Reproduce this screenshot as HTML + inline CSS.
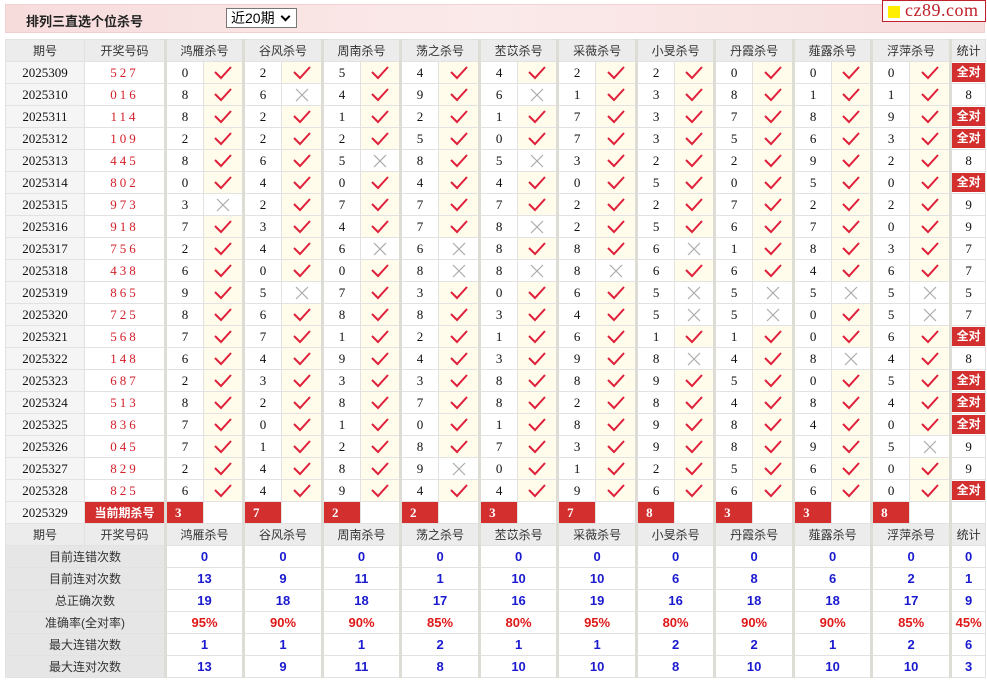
<!DOCTYPE html>
<html><head><meta charset="utf-8">
<style>
*{box-sizing:border-box}
body{margin:0;width:987px;height:680px;background:#fff;position:relative;font-family:"Liberation Sans","Noto Sans CJK SC",sans-serif;overflow:hidden}
.top{position:absolute;left:5px;top:4px;width:980px;height:29px;background:linear-gradient(90deg,#f7dcdc,#fbeaea 50%,#f7dcdc);border:1px solid #f0d0d0}
.title{position:absolute;left:20px;top:6px;font-size:13px;font-weight:bold;color:#222}
.sel{position:absolute;left:226px;top:8px;width:71px;height:20px;border:1px solid #777;background:#fff;font-size:14px;line-height:18px;padding-left:4px;color:#000}
.sel:after{content:"";position:absolute;right:7px;top:4px;width:5px;height:5px;border-right:2px solid #000;border-bottom:2px solid #000;transform:rotate(45deg)}
.logo{position:absolute;left:882px;top:0;width:104px;height:22px;background:#fff;border:1px solid #c0202a;font-family:"Liberation Serif",serif;font-size:18px;color:#c0202a;line-height:19px;padding-left:22px;letter-spacing:.5px}
.logo:before{content:"";position:absolute;left:5px;top:5px;width:12px;height:12px;background:#ffee00}
table{position:absolute;left:5px;top:39px;width:980px;border-collapse:collapse;table-layout:fixed}
td{height:22px;padding:0;border:1px solid #e2e2e2;text-align:center;font-family:"Liberation Serif","Noto Sans CJK SC",serif;font-size:13px;color:#111;vertical-align:middle;overflow:hidden}
tr.h td{background:#ececec;font-family:"Liberation Sans","Noto Sans CJK SC",sans-serif;font-size:12px;color:#333}
td.p{background:#f5f5f5}
td.d{color:#d4202a;letter-spacing:3px}
td.n{border-left:3px solid #ddddd5}
td.y{background:#fffcec}
td.s{border-left:3px solid #ddddd5}
tr.h td.g{border-left:3px solid #ddddd5}
.b{display:inline-block;background:#d32f2f;color:#fff;font-family:"Liberation Sans","Noto Sans CJK SC",sans-serif;font-weight:bold;font-size:12px;width:33px;height:19px;line-height:19px}
td.r{background:#d32f2f;color:#fff;font-weight:bold;text-align:left;padding-left:8px}
td.cur{background:#d32f2f;color:#fff;font-weight:bold;font-family:"Liberation Sans","Noto Sans CJK SC",sans-serif;font-size:12px}
td.L{background:#e6e6e6;font-family:"Liberation Sans","Noto Sans CJK SC",sans-serif;font-size:12px;color:#333}
td.v{font-family:"Liberation Sans",sans-serif;font-weight:bold;font-size:13px;color:#1a1ad0}
td.v.rd{color:#e01818}
svg{display:block;margin:auto}
.k path{fill:none;stroke:#e0203a;stroke-width:2}
.x path{fill:none;stroke:#aaa;stroke-width:1.2}
</style></head><body>
<div class="top"><div class="title">排列三直选个位杀号</div></div>
<div class="sel">近20期</div>
<div class="logo">cz89.com</div>
<table>
<colgroup><col style="width:79px"><col style="width:81px">
<col style="width:38px"><col style="width:40px"><col style="width:38px"><col style="width:41px"><col style="width:38px"><col style="width:40px"><col style="width:38px"><col style="width:41px"><col style="width:38px"><col style="width:40px"><col style="width:38px"><col style="width:41px"><col style="width:38px"><col style="width:40px"><col style="width:38px"><col style="width:41px"><col style="width:38px"><col style="width:40px"><col style="width:38px"><col style="width:41px"><col style="width:35px"></colgroup>
<tr class="h"><td>期号</td><td>开奖号码</td><td colspan="2" class="g">鸿雁杀号</td><td colspan="2" class="g">谷风杀号</td><td colspan="2" class="g">周南杀号</td><td colspan="2" class="g">荡之杀号</td><td colspan="2" class="g">苤苡杀号</td><td colspan="2" class="g">采薇杀号</td><td colspan="2" class="g">小旻杀号</td><td colspan="2" class="g">丹霞杀号</td><td colspan="2" class="g">薤露杀号</td><td colspan="2" class="g">浮萍杀号</td><td class="g">统计</td></tr>
<tr><td class="p">2025309</td><td class="d">527</td><td class="n">0</td><td class="y"><svg class="k" width="18" height="14"><path d="M1 6L7 12L17 1"/></svg></td><td class="n">2</td><td class="y"><svg class="k" width="18" height="14"><path d="M1 6L7 12L17 1"/></svg></td><td class="n">5</td><td class="y"><svg class="k" width="18" height="14"><path d="M1 6L7 12L17 1"/></svg></td><td class="n">4</td><td class="y"><svg class="k" width="18" height="14"><path d="M1 6L7 12L17 1"/></svg></td><td class="n">4</td><td class="y"><svg class="k" width="18" height="14"><path d="M1 6L7 12L17 1"/></svg></td><td class="n">2</td><td class="y"><svg class="k" width="18" height="14"><path d="M1 6L7 12L17 1"/></svg></td><td class="n">2</td><td class="y"><svg class="k" width="18" height="14"><path d="M1 6L7 12L17 1"/></svg></td><td class="n">0</td><td class="y"><svg class="k" width="18" height="14"><path d="M1 6L7 12L17 1"/></svg></td><td class="n">0</td><td class="y"><svg class="k" width="18" height="14"><path d="M1 6L7 12L17 1"/></svg></td><td class="n">0</td><td class="y"><svg class="k" width="18" height="14"><path d="M1 6L7 12L17 1"/></svg></td><td class="s"><span class="b">全对</span></td></tr>
<tr><td class="p">2025310</td><td class="d">016</td><td class="n">8</td><td class="y"><svg class="k" width="18" height="14"><path d="M1 6L7 12L17 1"/></svg></td><td class="n">6</td><td><svg class="x" width="14" height="14"><path d="M1 1L13 13M13 1L1 13"/></svg></td><td class="n">4</td><td class="y"><svg class="k" width="18" height="14"><path d="M1 6L7 12L17 1"/></svg></td><td class="n">9</td><td class="y"><svg class="k" width="18" height="14"><path d="M1 6L7 12L17 1"/></svg></td><td class="n">6</td><td><svg class="x" width="14" height="14"><path d="M1 1L13 13M13 1L1 13"/></svg></td><td class="n">1</td><td class="y"><svg class="k" width="18" height="14"><path d="M1 6L7 12L17 1"/></svg></td><td class="n">3</td><td class="y"><svg class="k" width="18" height="14"><path d="M1 6L7 12L17 1"/></svg></td><td class="n">8</td><td class="y"><svg class="k" width="18" height="14"><path d="M1 6L7 12L17 1"/></svg></td><td class="n">1</td><td class="y"><svg class="k" width="18" height="14"><path d="M1 6L7 12L17 1"/></svg></td><td class="n">1</td><td class="y"><svg class="k" width="18" height="14"><path d="M1 6L7 12L17 1"/></svg></td><td class="s">8</td></tr>
<tr><td class="p">2025311</td><td class="d">114</td><td class="n">8</td><td class="y"><svg class="k" width="18" height="14"><path d="M1 6L7 12L17 1"/></svg></td><td class="n">2</td><td class="y"><svg class="k" width="18" height="14"><path d="M1 6L7 12L17 1"/></svg></td><td class="n">1</td><td class="y"><svg class="k" width="18" height="14"><path d="M1 6L7 12L17 1"/></svg></td><td class="n">2</td><td class="y"><svg class="k" width="18" height="14"><path d="M1 6L7 12L17 1"/></svg></td><td class="n">1</td><td class="y"><svg class="k" width="18" height="14"><path d="M1 6L7 12L17 1"/></svg></td><td class="n">7</td><td class="y"><svg class="k" width="18" height="14"><path d="M1 6L7 12L17 1"/></svg></td><td class="n">3</td><td class="y"><svg class="k" width="18" height="14"><path d="M1 6L7 12L17 1"/></svg></td><td class="n">7</td><td class="y"><svg class="k" width="18" height="14"><path d="M1 6L7 12L17 1"/></svg></td><td class="n">8</td><td class="y"><svg class="k" width="18" height="14"><path d="M1 6L7 12L17 1"/></svg></td><td class="n">9</td><td class="y"><svg class="k" width="18" height="14"><path d="M1 6L7 12L17 1"/></svg></td><td class="s"><span class="b">全对</span></td></tr>
<tr><td class="p">2025312</td><td class="d">109</td><td class="n">2</td><td class="y"><svg class="k" width="18" height="14"><path d="M1 6L7 12L17 1"/></svg></td><td class="n">2</td><td class="y"><svg class="k" width="18" height="14"><path d="M1 6L7 12L17 1"/></svg></td><td class="n">2</td><td class="y"><svg class="k" width="18" height="14"><path d="M1 6L7 12L17 1"/></svg></td><td class="n">5</td><td class="y"><svg class="k" width="18" height="14"><path d="M1 6L7 12L17 1"/></svg></td><td class="n">0</td><td class="y"><svg class="k" width="18" height="14"><path d="M1 6L7 12L17 1"/></svg></td><td class="n">7</td><td class="y"><svg class="k" width="18" height="14"><path d="M1 6L7 12L17 1"/></svg></td><td class="n">3</td><td class="y"><svg class="k" width="18" height="14"><path d="M1 6L7 12L17 1"/></svg></td><td class="n">5</td><td class="y"><svg class="k" width="18" height="14"><path d="M1 6L7 12L17 1"/></svg></td><td class="n">6</td><td class="y"><svg class="k" width="18" height="14"><path d="M1 6L7 12L17 1"/></svg></td><td class="n">3</td><td class="y"><svg class="k" width="18" height="14"><path d="M1 6L7 12L17 1"/></svg></td><td class="s"><span class="b">全对</span></td></tr>
<tr><td class="p">2025313</td><td class="d">445</td><td class="n">8</td><td class="y"><svg class="k" width="18" height="14"><path d="M1 6L7 12L17 1"/></svg></td><td class="n">6</td><td class="y"><svg class="k" width="18" height="14"><path d="M1 6L7 12L17 1"/></svg></td><td class="n">5</td><td><svg class="x" width="14" height="14"><path d="M1 1L13 13M13 1L1 13"/></svg></td><td class="n">8</td><td class="y"><svg class="k" width="18" height="14"><path d="M1 6L7 12L17 1"/></svg></td><td class="n">5</td><td><svg class="x" width="14" height="14"><path d="M1 1L13 13M13 1L1 13"/></svg></td><td class="n">3</td><td class="y"><svg class="k" width="18" height="14"><path d="M1 6L7 12L17 1"/></svg></td><td class="n">2</td><td class="y"><svg class="k" width="18" height="14"><path d="M1 6L7 12L17 1"/></svg></td><td class="n">2</td><td class="y"><svg class="k" width="18" height="14"><path d="M1 6L7 12L17 1"/></svg></td><td class="n">9</td><td class="y"><svg class="k" width="18" height="14"><path d="M1 6L7 12L17 1"/></svg></td><td class="n">2</td><td class="y"><svg class="k" width="18" height="14"><path d="M1 6L7 12L17 1"/></svg></td><td class="s">8</td></tr>
<tr><td class="p">2025314</td><td class="d">802</td><td class="n">0</td><td class="y"><svg class="k" width="18" height="14"><path d="M1 6L7 12L17 1"/></svg></td><td class="n">4</td><td class="y"><svg class="k" width="18" height="14"><path d="M1 6L7 12L17 1"/></svg></td><td class="n">0</td><td class="y"><svg class="k" width="18" height="14"><path d="M1 6L7 12L17 1"/></svg></td><td class="n">4</td><td class="y"><svg class="k" width="18" height="14"><path d="M1 6L7 12L17 1"/></svg></td><td class="n">4</td><td class="y"><svg class="k" width="18" height="14"><path d="M1 6L7 12L17 1"/></svg></td><td class="n">0</td><td class="y"><svg class="k" width="18" height="14"><path d="M1 6L7 12L17 1"/></svg></td><td class="n">5</td><td class="y"><svg class="k" width="18" height="14"><path d="M1 6L7 12L17 1"/></svg></td><td class="n">0</td><td class="y"><svg class="k" width="18" height="14"><path d="M1 6L7 12L17 1"/></svg></td><td class="n">5</td><td class="y"><svg class="k" width="18" height="14"><path d="M1 6L7 12L17 1"/></svg></td><td class="n">0</td><td class="y"><svg class="k" width="18" height="14"><path d="M1 6L7 12L17 1"/></svg></td><td class="s"><span class="b">全对</span></td></tr>
<tr><td class="p">2025315</td><td class="d">973</td><td class="n">3</td><td><svg class="x" width="14" height="14"><path d="M1 1L13 13M13 1L1 13"/></svg></td><td class="n">2</td><td class="y"><svg class="k" width="18" height="14"><path d="M1 6L7 12L17 1"/></svg></td><td class="n">7</td><td class="y"><svg class="k" width="18" height="14"><path d="M1 6L7 12L17 1"/></svg></td><td class="n">7</td><td class="y"><svg class="k" width="18" height="14"><path d="M1 6L7 12L17 1"/></svg></td><td class="n">7</td><td class="y"><svg class="k" width="18" height="14"><path d="M1 6L7 12L17 1"/></svg></td><td class="n">2</td><td class="y"><svg class="k" width="18" height="14"><path d="M1 6L7 12L17 1"/></svg></td><td class="n">2</td><td class="y"><svg class="k" width="18" height="14"><path d="M1 6L7 12L17 1"/></svg></td><td class="n">7</td><td class="y"><svg class="k" width="18" height="14"><path d="M1 6L7 12L17 1"/></svg></td><td class="n">2</td><td class="y"><svg class="k" width="18" height="14"><path d="M1 6L7 12L17 1"/></svg></td><td class="n">2</td><td class="y"><svg class="k" width="18" height="14"><path d="M1 6L7 12L17 1"/></svg></td><td class="s">9</td></tr>
<tr><td class="p">2025316</td><td class="d">918</td><td class="n">7</td><td class="y"><svg class="k" width="18" height="14"><path d="M1 6L7 12L17 1"/></svg></td><td class="n">3</td><td class="y"><svg class="k" width="18" height="14"><path d="M1 6L7 12L17 1"/></svg></td><td class="n">4</td><td class="y"><svg class="k" width="18" height="14"><path d="M1 6L7 12L17 1"/></svg></td><td class="n">7</td><td class="y"><svg class="k" width="18" height="14"><path d="M1 6L7 12L17 1"/></svg></td><td class="n">8</td><td><svg class="x" width="14" height="14"><path d="M1 1L13 13M13 1L1 13"/></svg></td><td class="n">2</td><td class="y"><svg class="k" width="18" height="14"><path d="M1 6L7 12L17 1"/></svg></td><td class="n">5</td><td class="y"><svg class="k" width="18" height="14"><path d="M1 6L7 12L17 1"/></svg></td><td class="n">6</td><td class="y"><svg class="k" width="18" height="14"><path d="M1 6L7 12L17 1"/></svg></td><td class="n">7</td><td class="y"><svg class="k" width="18" height="14"><path d="M1 6L7 12L17 1"/></svg></td><td class="n">0</td><td class="y"><svg class="k" width="18" height="14"><path d="M1 6L7 12L17 1"/></svg></td><td class="s">9</td></tr>
<tr><td class="p">2025317</td><td class="d">756</td><td class="n">2</td><td class="y"><svg class="k" width="18" height="14"><path d="M1 6L7 12L17 1"/></svg></td><td class="n">4</td><td class="y"><svg class="k" width="18" height="14"><path d="M1 6L7 12L17 1"/></svg></td><td class="n">6</td><td><svg class="x" width="14" height="14"><path d="M1 1L13 13M13 1L1 13"/></svg></td><td class="n">6</td><td><svg class="x" width="14" height="14"><path d="M1 1L13 13M13 1L1 13"/></svg></td><td class="n">8</td><td class="y"><svg class="k" width="18" height="14"><path d="M1 6L7 12L17 1"/></svg></td><td class="n">8</td><td class="y"><svg class="k" width="18" height="14"><path d="M1 6L7 12L17 1"/></svg></td><td class="n">6</td><td><svg class="x" width="14" height="14"><path d="M1 1L13 13M13 1L1 13"/></svg></td><td class="n">1</td><td class="y"><svg class="k" width="18" height="14"><path d="M1 6L7 12L17 1"/></svg></td><td class="n">8</td><td class="y"><svg class="k" width="18" height="14"><path d="M1 6L7 12L17 1"/></svg></td><td class="n">3</td><td class="y"><svg class="k" width="18" height="14"><path d="M1 6L7 12L17 1"/></svg></td><td class="s">7</td></tr>
<tr><td class="p">2025318</td><td class="d">438</td><td class="n">6</td><td class="y"><svg class="k" width="18" height="14"><path d="M1 6L7 12L17 1"/></svg></td><td class="n">0</td><td class="y"><svg class="k" width="18" height="14"><path d="M1 6L7 12L17 1"/></svg></td><td class="n">0</td><td class="y"><svg class="k" width="18" height="14"><path d="M1 6L7 12L17 1"/></svg></td><td class="n">8</td><td><svg class="x" width="14" height="14"><path d="M1 1L13 13M13 1L1 13"/></svg></td><td class="n">8</td><td><svg class="x" width="14" height="14"><path d="M1 1L13 13M13 1L1 13"/></svg></td><td class="n">8</td><td><svg class="x" width="14" height="14"><path d="M1 1L13 13M13 1L1 13"/></svg></td><td class="n">6</td><td class="y"><svg class="k" width="18" height="14"><path d="M1 6L7 12L17 1"/></svg></td><td class="n">6</td><td class="y"><svg class="k" width="18" height="14"><path d="M1 6L7 12L17 1"/></svg></td><td class="n">4</td><td class="y"><svg class="k" width="18" height="14"><path d="M1 6L7 12L17 1"/></svg></td><td class="n">6</td><td class="y"><svg class="k" width="18" height="14"><path d="M1 6L7 12L17 1"/></svg></td><td class="s">7</td></tr>
<tr><td class="p">2025319</td><td class="d">865</td><td class="n">9</td><td class="y"><svg class="k" width="18" height="14"><path d="M1 6L7 12L17 1"/></svg></td><td class="n">5</td><td><svg class="x" width="14" height="14"><path d="M1 1L13 13M13 1L1 13"/></svg></td><td class="n">7</td><td class="y"><svg class="k" width="18" height="14"><path d="M1 6L7 12L17 1"/></svg></td><td class="n">3</td><td class="y"><svg class="k" width="18" height="14"><path d="M1 6L7 12L17 1"/></svg></td><td class="n">0</td><td class="y"><svg class="k" width="18" height="14"><path d="M1 6L7 12L17 1"/></svg></td><td class="n">6</td><td class="y"><svg class="k" width="18" height="14"><path d="M1 6L7 12L17 1"/></svg></td><td class="n">5</td><td><svg class="x" width="14" height="14"><path d="M1 1L13 13M13 1L1 13"/></svg></td><td class="n">5</td><td><svg class="x" width="14" height="14"><path d="M1 1L13 13M13 1L1 13"/></svg></td><td class="n">5</td><td><svg class="x" width="14" height="14"><path d="M1 1L13 13M13 1L1 13"/></svg></td><td class="n">5</td><td><svg class="x" width="14" height="14"><path d="M1 1L13 13M13 1L1 13"/></svg></td><td class="s">5</td></tr>
<tr><td class="p">2025320</td><td class="d">725</td><td class="n">8</td><td class="y"><svg class="k" width="18" height="14"><path d="M1 6L7 12L17 1"/></svg></td><td class="n">6</td><td class="y"><svg class="k" width="18" height="14"><path d="M1 6L7 12L17 1"/></svg></td><td class="n">8</td><td class="y"><svg class="k" width="18" height="14"><path d="M1 6L7 12L17 1"/></svg></td><td class="n">8</td><td class="y"><svg class="k" width="18" height="14"><path d="M1 6L7 12L17 1"/></svg></td><td class="n">3</td><td class="y"><svg class="k" width="18" height="14"><path d="M1 6L7 12L17 1"/></svg></td><td class="n">4</td><td class="y"><svg class="k" width="18" height="14"><path d="M1 6L7 12L17 1"/></svg></td><td class="n">5</td><td><svg class="x" width="14" height="14"><path d="M1 1L13 13M13 1L1 13"/></svg></td><td class="n">5</td><td><svg class="x" width="14" height="14"><path d="M1 1L13 13M13 1L1 13"/></svg></td><td class="n">0</td><td class="y"><svg class="k" width="18" height="14"><path d="M1 6L7 12L17 1"/></svg></td><td class="n">5</td><td><svg class="x" width="14" height="14"><path d="M1 1L13 13M13 1L1 13"/></svg></td><td class="s">7</td></tr>
<tr><td class="p">2025321</td><td class="d">568</td><td class="n">7</td><td class="y"><svg class="k" width="18" height="14"><path d="M1 6L7 12L17 1"/></svg></td><td class="n">7</td><td class="y"><svg class="k" width="18" height="14"><path d="M1 6L7 12L17 1"/></svg></td><td class="n">1</td><td class="y"><svg class="k" width="18" height="14"><path d="M1 6L7 12L17 1"/></svg></td><td class="n">2</td><td class="y"><svg class="k" width="18" height="14"><path d="M1 6L7 12L17 1"/></svg></td><td class="n">1</td><td class="y"><svg class="k" width="18" height="14"><path d="M1 6L7 12L17 1"/></svg></td><td class="n">6</td><td class="y"><svg class="k" width="18" height="14"><path d="M1 6L7 12L17 1"/></svg></td><td class="n">1</td><td class="y"><svg class="k" width="18" height="14"><path d="M1 6L7 12L17 1"/></svg></td><td class="n">1</td><td class="y"><svg class="k" width="18" height="14"><path d="M1 6L7 12L17 1"/></svg></td><td class="n">0</td><td class="y"><svg class="k" width="18" height="14"><path d="M1 6L7 12L17 1"/></svg></td><td class="n">6</td><td class="y"><svg class="k" width="18" height="14"><path d="M1 6L7 12L17 1"/></svg></td><td class="s"><span class="b">全对</span></td></tr>
<tr><td class="p">2025322</td><td class="d">148</td><td class="n">6</td><td class="y"><svg class="k" width="18" height="14"><path d="M1 6L7 12L17 1"/></svg></td><td class="n">4</td><td class="y"><svg class="k" width="18" height="14"><path d="M1 6L7 12L17 1"/></svg></td><td class="n">9</td><td class="y"><svg class="k" width="18" height="14"><path d="M1 6L7 12L17 1"/></svg></td><td class="n">4</td><td class="y"><svg class="k" width="18" height="14"><path d="M1 6L7 12L17 1"/></svg></td><td class="n">3</td><td class="y"><svg class="k" width="18" height="14"><path d="M1 6L7 12L17 1"/></svg></td><td class="n">9</td><td class="y"><svg class="k" width="18" height="14"><path d="M1 6L7 12L17 1"/></svg></td><td class="n">8</td><td><svg class="x" width="14" height="14"><path d="M1 1L13 13M13 1L1 13"/></svg></td><td class="n">4</td><td class="y"><svg class="k" width="18" height="14"><path d="M1 6L7 12L17 1"/></svg></td><td class="n">8</td><td><svg class="x" width="14" height="14"><path d="M1 1L13 13M13 1L1 13"/></svg></td><td class="n">4</td><td class="y"><svg class="k" width="18" height="14"><path d="M1 6L7 12L17 1"/></svg></td><td class="s">8</td></tr>
<tr><td class="p">2025323</td><td class="d">687</td><td class="n">2</td><td class="y"><svg class="k" width="18" height="14"><path d="M1 6L7 12L17 1"/></svg></td><td class="n">3</td><td class="y"><svg class="k" width="18" height="14"><path d="M1 6L7 12L17 1"/></svg></td><td class="n">3</td><td class="y"><svg class="k" width="18" height="14"><path d="M1 6L7 12L17 1"/></svg></td><td class="n">3</td><td class="y"><svg class="k" width="18" height="14"><path d="M1 6L7 12L17 1"/></svg></td><td class="n">8</td><td class="y"><svg class="k" width="18" height="14"><path d="M1 6L7 12L17 1"/></svg></td><td class="n">8</td><td class="y"><svg class="k" width="18" height="14"><path d="M1 6L7 12L17 1"/></svg></td><td class="n">9</td><td class="y"><svg class="k" width="18" height="14"><path d="M1 6L7 12L17 1"/></svg></td><td class="n">5</td><td class="y"><svg class="k" width="18" height="14"><path d="M1 6L7 12L17 1"/></svg></td><td class="n">0</td><td class="y"><svg class="k" width="18" height="14"><path d="M1 6L7 12L17 1"/></svg></td><td class="n">5</td><td class="y"><svg class="k" width="18" height="14"><path d="M1 6L7 12L17 1"/></svg></td><td class="s"><span class="b">全对</span></td></tr>
<tr><td class="p">2025324</td><td class="d">513</td><td class="n">8</td><td class="y"><svg class="k" width="18" height="14"><path d="M1 6L7 12L17 1"/></svg></td><td class="n">2</td><td class="y"><svg class="k" width="18" height="14"><path d="M1 6L7 12L17 1"/></svg></td><td class="n">8</td><td class="y"><svg class="k" width="18" height="14"><path d="M1 6L7 12L17 1"/></svg></td><td class="n">7</td><td class="y"><svg class="k" width="18" height="14"><path d="M1 6L7 12L17 1"/></svg></td><td class="n">8</td><td class="y"><svg class="k" width="18" height="14"><path d="M1 6L7 12L17 1"/></svg></td><td class="n">2</td><td class="y"><svg class="k" width="18" height="14"><path d="M1 6L7 12L17 1"/></svg></td><td class="n">8</td><td class="y"><svg class="k" width="18" height="14"><path d="M1 6L7 12L17 1"/></svg></td><td class="n">4</td><td class="y"><svg class="k" width="18" height="14"><path d="M1 6L7 12L17 1"/></svg></td><td class="n">8</td><td class="y"><svg class="k" width="18" height="14"><path d="M1 6L7 12L17 1"/></svg></td><td class="n">4</td><td class="y"><svg class="k" width="18" height="14"><path d="M1 6L7 12L17 1"/></svg></td><td class="s"><span class="b">全对</span></td></tr>
<tr><td class="p">2025325</td><td class="d">836</td><td class="n">7</td><td class="y"><svg class="k" width="18" height="14"><path d="M1 6L7 12L17 1"/></svg></td><td class="n">0</td><td class="y"><svg class="k" width="18" height="14"><path d="M1 6L7 12L17 1"/></svg></td><td class="n">1</td><td class="y"><svg class="k" width="18" height="14"><path d="M1 6L7 12L17 1"/></svg></td><td class="n">0</td><td class="y"><svg class="k" width="18" height="14"><path d="M1 6L7 12L17 1"/></svg></td><td class="n">1</td><td class="y"><svg class="k" width="18" height="14"><path d="M1 6L7 12L17 1"/></svg></td><td class="n">8</td><td class="y"><svg class="k" width="18" height="14"><path d="M1 6L7 12L17 1"/></svg></td><td class="n">9</td><td class="y"><svg class="k" width="18" height="14"><path d="M1 6L7 12L17 1"/></svg></td><td class="n">8</td><td class="y"><svg class="k" width="18" height="14"><path d="M1 6L7 12L17 1"/></svg></td><td class="n">4</td><td class="y"><svg class="k" width="18" height="14"><path d="M1 6L7 12L17 1"/></svg></td><td class="n">0</td><td class="y"><svg class="k" width="18" height="14"><path d="M1 6L7 12L17 1"/></svg></td><td class="s"><span class="b">全对</span></td></tr>
<tr><td class="p">2025326</td><td class="d">045</td><td class="n">7</td><td class="y"><svg class="k" width="18" height="14"><path d="M1 6L7 12L17 1"/></svg></td><td class="n">1</td><td class="y"><svg class="k" width="18" height="14"><path d="M1 6L7 12L17 1"/></svg></td><td class="n">2</td><td class="y"><svg class="k" width="18" height="14"><path d="M1 6L7 12L17 1"/></svg></td><td class="n">8</td><td class="y"><svg class="k" width="18" height="14"><path d="M1 6L7 12L17 1"/></svg></td><td class="n">7</td><td class="y"><svg class="k" width="18" height="14"><path d="M1 6L7 12L17 1"/></svg></td><td class="n">3</td><td class="y"><svg class="k" width="18" height="14"><path d="M1 6L7 12L17 1"/></svg></td><td class="n">9</td><td class="y"><svg class="k" width="18" height="14"><path d="M1 6L7 12L17 1"/></svg></td><td class="n">8</td><td class="y"><svg class="k" width="18" height="14"><path d="M1 6L7 12L17 1"/></svg></td><td class="n">9</td><td class="y"><svg class="k" width="18" height="14"><path d="M1 6L7 12L17 1"/></svg></td><td class="n">5</td><td><svg class="x" width="14" height="14"><path d="M1 1L13 13M13 1L1 13"/></svg></td><td class="s">9</td></tr>
<tr><td class="p">2025327</td><td class="d">829</td><td class="n">2</td><td class="y"><svg class="k" width="18" height="14"><path d="M1 6L7 12L17 1"/></svg></td><td class="n">4</td><td class="y"><svg class="k" width="18" height="14"><path d="M1 6L7 12L17 1"/></svg></td><td class="n">8</td><td class="y"><svg class="k" width="18" height="14"><path d="M1 6L7 12L17 1"/></svg></td><td class="n">9</td><td><svg class="x" width="14" height="14"><path d="M1 1L13 13M13 1L1 13"/></svg></td><td class="n">0</td><td class="y"><svg class="k" width="18" height="14"><path d="M1 6L7 12L17 1"/></svg></td><td class="n">1</td><td class="y"><svg class="k" width="18" height="14"><path d="M1 6L7 12L17 1"/></svg></td><td class="n">2</td><td class="y"><svg class="k" width="18" height="14"><path d="M1 6L7 12L17 1"/></svg></td><td class="n">5</td><td class="y"><svg class="k" width="18" height="14"><path d="M1 6L7 12L17 1"/></svg></td><td class="n">6</td><td class="y"><svg class="k" width="18" height="14"><path d="M1 6L7 12L17 1"/></svg></td><td class="n">0</td><td class="y"><svg class="k" width="18" height="14"><path d="M1 6L7 12L17 1"/></svg></td><td class="s">9</td></tr>
<tr><td class="p">2025328</td><td class="d">825</td><td class="n">6</td><td class="y"><svg class="k" width="18" height="14"><path d="M1 6L7 12L17 1"/></svg></td><td class="n">4</td><td class="y"><svg class="k" width="18" height="14"><path d="M1 6L7 12L17 1"/></svg></td><td class="n">9</td><td class="y"><svg class="k" width="18" height="14"><path d="M1 6L7 12L17 1"/></svg></td><td class="n">4</td><td class="y"><svg class="k" width="18" height="14"><path d="M1 6L7 12L17 1"/></svg></td><td class="n">4</td><td class="y"><svg class="k" width="18" height="14"><path d="M1 6L7 12L17 1"/></svg></td><td class="n">9</td><td class="y"><svg class="k" width="18" height="14"><path d="M1 6L7 12L17 1"/></svg></td><td class="n">6</td><td class="y"><svg class="k" width="18" height="14"><path d="M1 6L7 12L17 1"/></svg></td><td class="n">6</td><td class="y"><svg class="k" width="18" height="14"><path d="M1 6L7 12L17 1"/></svg></td><td class="n">6</td><td class="y"><svg class="k" width="18" height="14"><path d="M1 6L7 12L17 1"/></svg></td><td class="n">0</td><td class="y"><svg class="k" width="18" height="14"><path d="M1 6L7 12L17 1"/></svg></td><td class="s"><span class="b">全对</span></td></tr>
<tr><td class="p">2025329</td><td class="cur">当前期杀号</td><td class="n r">3</td><td></td><td class="n r">7</td><td></td><td class="n r">2</td><td></td><td class="n r">2</td><td></td><td class="n r">3</td><td></td><td class="n r">7</td><td></td><td class="n r">8</td><td></td><td class="n r">3</td><td></td><td class="n r">3</td><td></td><td class="n r">8</td><td></td><td class="s"></td></tr>
<tr class="h"><td>期号</td><td>开奖号码</td><td colspan="2" class="g">鸿雁杀号</td><td colspan="2" class="g">谷风杀号</td><td colspan="2" class="g">周南杀号</td><td colspan="2" class="g">荡之杀号</td><td colspan="2" class="g">苤苡杀号</td><td colspan="2" class="g">采薇杀号</td><td colspan="2" class="g">小旻杀号</td><td colspan="2" class="g">丹霞杀号</td><td colspan="2" class="g">薤露杀号</td><td colspan="2" class="g">浮萍杀号</td><td class="g">统计</td></tr>
<tr><td colspan="2" class="L">目前连错次数</td><td colspan="2" class="v n">0</td><td colspan="2" class="v n">0</td><td colspan="2" class="v n">0</td><td colspan="2" class="v n">0</td><td colspan="2" class="v n">0</td><td colspan="2" class="v n">0</td><td colspan="2" class="v n">0</td><td colspan="2" class="v n">0</td><td colspan="2" class="v n">0</td><td colspan="2" class="v n">0</td><td class="v s">0</td></tr>
<tr><td colspan="2" class="L">目前连对次数</td><td colspan="2" class="v n">13</td><td colspan="2" class="v n">9</td><td colspan="2" class="v n">11</td><td colspan="2" class="v n">1</td><td colspan="2" class="v n">10</td><td colspan="2" class="v n">10</td><td colspan="2" class="v n">6</td><td colspan="2" class="v n">8</td><td colspan="2" class="v n">6</td><td colspan="2" class="v n">2</td><td class="v s">1</td></tr>
<tr><td colspan="2" class="L">总正确次数</td><td colspan="2" class="v n">19</td><td colspan="2" class="v n">18</td><td colspan="2" class="v n">18</td><td colspan="2" class="v n">17</td><td colspan="2" class="v n">16</td><td colspan="2" class="v n">19</td><td colspan="2" class="v n">16</td><td colspan="2" class="v n">18</td><td colspan="2" class="v n">18</td><td colspan="2" class="v n">17</td><td class="v s">9</td></tr>
<tr><td colspan="2" class="L">准确率(全对率)</td><td colspan="2" class="v rd n">95%</td><td colspan="2" class="v rd n">90%</td><td colspan="2" class="v rd n">90%</td><td colspan="2" class="v rd n">85%</td><td colspan="2" class="v rd n">80%</td><td colspan="2" class="v rd n">95%</td><td colspan="2" class="v rd n">80%</td><td colspan="2" class="v rd n">90%</td><td colspan="2" class="v rd n">90%</td><td colspan="2" class="v rd n">85%</td><td class="v rd s">45%</td></tr>
<tr><td colspan="2" class="L">最大连错次数</td><td colspan="2" class="v n">1</td><td colspan="2" class="v n">1</td><td colspan="2" class="v n">1</td><td colspan="2" class="v n">2</td><td colspan="2" class="v n">1</td><td colspan="2" class="v n">1</td><td colspan="2" class="v n">2</td><td colspan="2" class="v n">2</td><td colspan="2" class="v n">1</td><td colspan="2" class="v n">2</td><td class="v s">6</td></tr>
<tr><td colspan="2" class="L">最大连对次数</td><td colspan="2" class="v n">13</td><td colspan="2" class="v n">9</td><td colspan="2" class="v n">11</td><td colspan="2" class="v n">8</td><td colspan="2" class="v n">10</td><td colspan="2" class="v n">10</td><td colspan="2" class="v n">8</td><td colspan="2" class="v n">10</td><td colspan="2" class="v n">10</td><td colspan="2" class="v n">10</td><td class="v s">3</td></tr>
</table>
</body></html>
